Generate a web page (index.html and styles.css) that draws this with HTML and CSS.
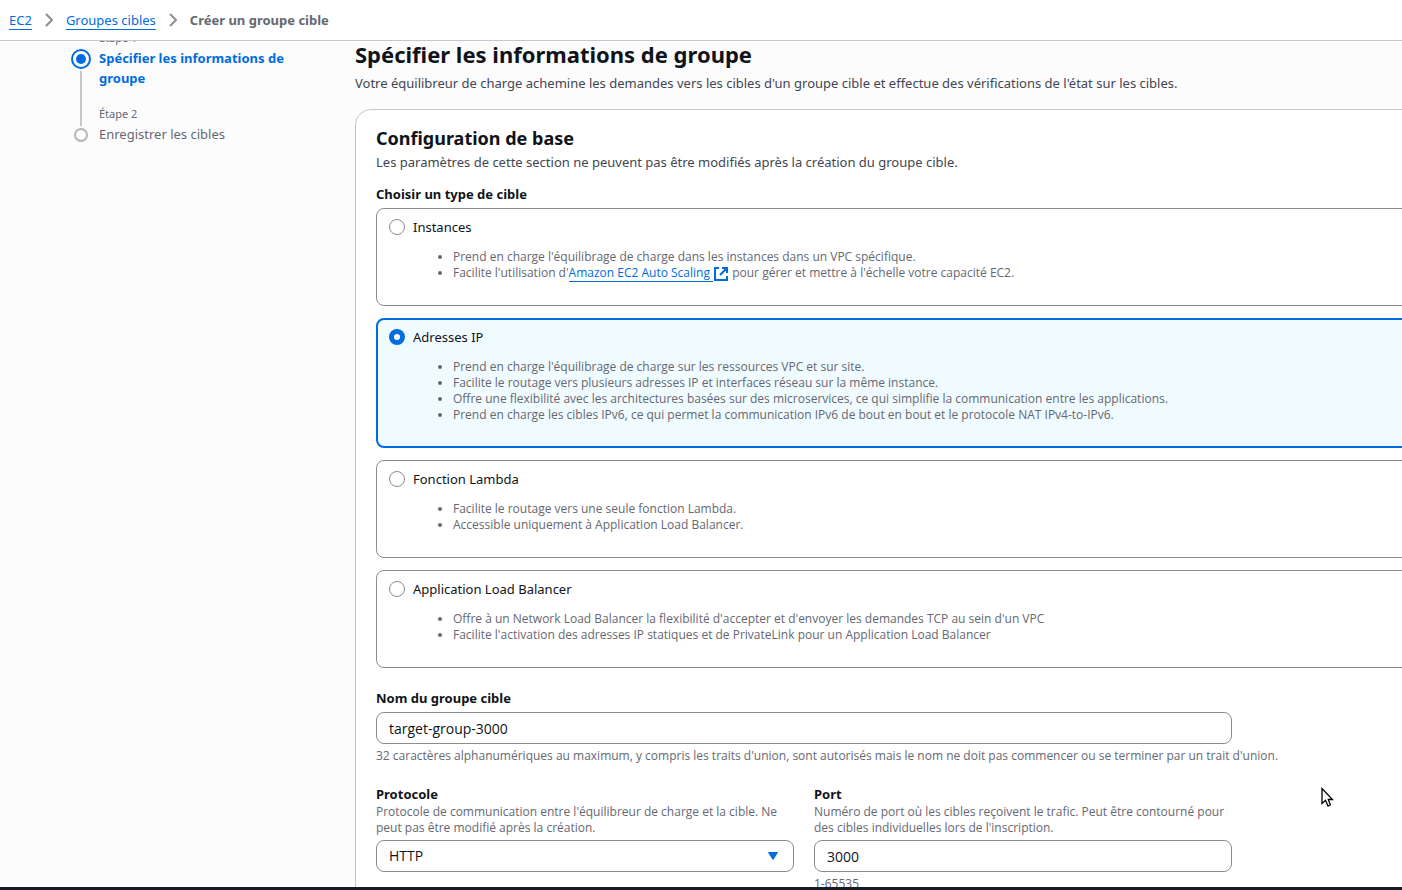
FILE: index.html
```html
<!DOCTYPE html>
<html lang="fr">
<head>
<meta charset="utf-8">
<meta name="viewport" content="width=device-width, initial-scale=1">
<title>Créer un groupe cible</title>
<link rel="stylesheet" href="styles.css">
</head>
<body>
<header class="topbar">
  <nav aria-label="Fil d'Ariane">
    <ol class="breadcrumbs">
      <li><a class="crumb-link" href="#ec2">EC2</a></li>
      <li><svg class="chevron" viewBox="0 0 16 16" aria-hidden="true"><path d="M4 2l6 6-6 6"/></svg><a class="crumb-link" href="#groupes">Groupes cibles</a></li>
      <li><svg class="chevron" viewBox="0 0 16 16" aria-hidden="true"><path d="M4 2l6 6-6 6"/></svg><span class="crumb-current" aria-current="page">Créer un groupe cible</span></li>
    </ol>
  </nav>
</header>
<div class="layout">
  <nav class="wizard-nav" aria-label="Étapes">
    <ol class="steps">
      <li class="step step-active">
        <span class="rail"><svg class="step-dot" viewBox="0 0 20 20" aria-hidden="true"><circle cx="10" cy="10" r="9" fill="none" stroke="currentColor" stroke-width="2"/><circle cx="10" cy="10" r="5" fill="currentColor"/></svg><span class="connector"></span></span>
        <span class="step-body"><span class="step-number">Étape 1</span><a class="step-title" href="#etape1" aria-current="step">Spécifier les informations de groupe</a></span>
      </li>
      <li class="step">
        <span class="rail"><svg class="step-dot" viewBox="0 0 20 20" aria-hidden="true"><circle cx="10" cy="10" r="6" fill="none" stroke="currentColor" stroke-width="2"/></svg></span>
        <span class="step-body"><span class="step-number">Étape 2</span><span class="step-title">Enregistrer les cibles</span></span>
      </li>
    </ol>
  </nav>
  <main class="content">
    <h1>Spécifier les informations de groupe</h1>
    <p class="lead">Votre équilibreur de charge achemine les demandes vers les cibles d'un groupe cible et effectue des vérifications de l'état sur les cibles.</p>
    <form class="panel">
      <h2>Configuration de base</h2>
      <p class="panel-lead">Les paramètres de cette section ne peuvent pas être modifiés après la création du groupe cible.</p>
      <fieldset class="tiles">
        <legend class="field-label">Choisir un type de cible</legend>
        <div class="tile">
          <input class="radio" type="radio" name="type" id="t-instances">
          <div class="tile-body">
            <label class="tile-label" for="t-instances">Instances</label>
            <ul class="tile-list">
              <li>Prend en charge l'équilibrage de charge dans les instances dans un VPC spécifique.</li>
              <li>Facilite l'utilisation d'<a class="ext-link" href="#autoscaling"><span class="ext-text">Amazon EC2 Auto Scaling&nbsp;</span><svg class="ext-icon" viewBox="0 0 14 14" aria-hidden="true"><path d="M5 1H1v12h12V9M8 1h5v5M13 1L6 8"/></svg></a> pour gérer et mettre à l'échelle votre capacité EC2.</li>
            </ul>
          </div>
        </div>
        <div class="tile tile-selected">
          <input class="radio" type="radio" name="type" id="t-ip" checked>
          <div class="tile-body">
            <label class="tile-label" for="t-ip">Adresses IP</label>
            <ul class="tile-list">
              <li>Prend en charge l'équilibrage de charge sur les ressources VPC et sur site.</li>
              <li>Facilite le routage vers plusieurs adresses IP et interfaces réseau sur la même instance.</li>
              <li>Offre une flexibilité avec les architectures basées sur des microservices, ce qui simplifie la communication entre les applications.</li>
              <li>Prend en charge les cibles IPv6, ce qui permet la communication IPv6 de bout en bout et le protocole NAT IPv4-to-IPv6.</li>
            </ul>
          </div>
        </div>
        <div class="tile">
          <input class="radio" type="radio" name="type" id="t-lambda">
          <div class="tile-body">
            <label class="tile-label" for="t-lambda">Fonction Lambda</label>
            <ul class="tile-list">
              <li>Facilite le routage vers une seule fonction Lambda.</li>
              <li>Accessible uniquement à Application Load Balancer.</li>
            </ul>
          </div>
        </div>
        <div class="tile">
          <input class="radio" type="radio" name="type" id="t-alb">
          <div class="tile-body">
            <label class="tile-label" for="t-alb">Application Load Balancer</label>
            <ul class="tile-list">
              <li>Offre à un Network Load Balancer la flexibilité d'accepter et d'envoyer les demandes TCP au sein d'un VPC</li>
              <li>Facilite l'activation des adresses IP statiques et de PrivateLink pour un Application Load Balancer</li>
            </ul>
          </div>
        </div>
      </fieldset>
      <div class="field">
        <label class="field-label" for="name">Nom du groupe cible</label>
        <input class="control control-wide" type="text" id="name" value="target-group-3000" aria-describedby="name-hint">
        <p class="hint" id="name-hint">32 caractères alphanumériques au maximum, y compris les traits d'union, sont autorisés mais le nom ne doit pas commencer ou se terminer par un trait d'union.</p>
      </div>
      <div class="field-row">
        <div class="field">
          <label class="field-label" for="protocol">Protocole</label>
          <p class="description">Protocole de communication entre l'équilibreur de charge et la cible. Ne peut pas être modifié après la création.</p>
          <div class="select-wrap">
            <select class="control" id="protocol"><option>HTTP</option></select>
            <svg class="caret" viewBox="0 0 12 10" aria-hidden="true"><path d="M1.500 1.500h9L6 8.500z"/></svg>
          </div>
        </div>
        <div class="field">
          <label class="field-label" for="port">Port</label>
          <p class="description">Numéro de port où les cibles reçoivent le trafic. Peut être contourné pour des cibles individuelles lors de l'inscription.</p>
          <input class="control" type="text" inputmode="numeric" id="port" value="3000" aria-describedby="port-hint">
          <p class="hint" id="port-hint">1-65535</p>
        </div>
      </div>
    </form>
  </main>
</div>
<footer class="bottombar"></footer>
<svg class="pointer" viewBox="0 0 14 20" aria-hidden="true"><path d="M2 1.500v15l3.500-3.200L8 19l2.300-1.200L8.300 12.500H12.500z"/></svg>
</body>
</html>
```
FILE: styles.css
```css
* { box-sizing: border-box; }

body {
  margin: 0;
  height: 100vh;
  display: flex;
  flex-direction: column;
  overflow: hidden;
  position: relative;
  background: #fcfcfd;
  color: #0f141a;
  font-family: "Noto Sans", "Open Sans", sans-serif;
  font-size: 13px;
  line-height: 20px;
}

h1, h2, p, ol, ul { margin: 0; padding: 0; }
ol { list-style: none; }
a { color: #006ce0; text-decoration: none; }

.topbar {
  flex: none;
  background: #fff;
  border-bottom: 1px solid #c6c6cd;
  padding: 10px 9px;
}
.breadcrumbs, .breadcrumbs li { display: flex; align-items: center; }
.crumb-link { box-shadow: 0 -1px 0 #006ce0 inset; }
.crumb-current { color: #656871; font-weight: 700; }
.chevron {
  width: 16px;
  height: 16px;
  margin: 0 8px 0 10px;
  fill: none;
  stroke: #8c8c94;
  stroke-width: 2;
}

.layout {
  flex: 1;
  min-height: 0;
  display: flex;
  overflow: hidden;
}

.wizard-nav { flex: none; width: 355px; padding: 0 56px 0 71px; }
.steps { display: flex; flex-direction: column; gap: 18px; margin-top: -11px; }
.step { display: flex; gap: 8px; color: #656871; }
.rail { display: flex; flex-direction: column; align-items: center; padding-top: 19px; color: #b4b4bb; }
.step-dot { width: 20px; height: 20px; flex: none; }
.connector { flex: 1; width: 2px; margin: 2px 0 -38px; background: #c6c6cd; }
.step-body { display: flex; flex-direction: column; gap: 2px; }
.step-number { font-size: 11px; line-height: 16px; }
.step-active .step-dot, .step-active .step-title { color: #006ce0; }
.step-active .step-title { font-weight: 700; }

.content { flex: 1; min-width: 0; margin-right: -143px; }
h1 { font-size: 22px; line-height: 26px; }
.lead { margin-top: 6px; color: #424650; }

.panel {
  margin-top: 16px;
  padding: 16px 20px;
  background: #fff;
  border: 1px solid #c6c6cd;
  border-radius: 16px;
}
h2 { font-size: 18px; line-height: 24px; }
.panel-lead { margin-top: 2px; color: #424650; }

.tiles {
  display: flex;
  flex-direction: column;
  gap: 12px;
  margin: 12px 0 0;
  padding: 0;
  border: 0;
  min-width: 0;
}
.field-label { display: block; padding: 0; font-weight: 700; }
.tiles .field-label { margin-bottom: 4px; }
.tile {
  display: flex;
  gap: 8px;
  padding: 8px 12px 12px;
  border: 1px solid #8c8c94;
  border-radius: 8px;
}
.tile-selected { padding: 7px 11px 11px; border: 2px solid #006ce0; background: #f0fbff; }
.radio {
  appearance: none;
  flex: none;
  width: 16px;
  height: 16px;
  margin: 2px 0;
  border: 1px solid #8c8c94;
  border-radius: 50%;
  background: #fff;
}
.radio:checked { border: 5px solid #006ce0; }
.tile-label { display: block; }
.tile-list {
  margin: 12px 0;
  padding-left: 40px;
  color: #656871;
  font-family: "Open Sans", "Noto Sans", sans-serif;
  font-size: 12px;
  line-height: 16px;
}
.ext-text { box-shadow: 0 1px 0 #006ce0; }
.ext-icon {
  width: 14px;
  height: 14px;
  margin: -2px 1px;
  vertical-align: middle;
  fill: none;
  stroke: #006ce0;
  stroke-width: 2;
}

.field { margin-top: 20px; }
.control {
  display: block;
  width: 100%;
  height: 32px;
  padding: 4px 12px;
  border: 1px solid #8c8c94;
  border-radius: 8px;
  background: #fff;
  color: #0f141a;
  font: 14px/20px "Open Sans", "Noto Sans", sans-serif;
  appearance: none;
}
.control-wide { width: calc(75% - 5px); margin-top: 4px; }
.hint, .description {
  color: #656871;
  font-family: "Open Sans", "Noto Sans", sans-serif;
  font-size: 12px;
  line-height: 16px;
}
.hint { margin-top: 4px; }
.description { margin-bottom: 4px; }
.field-row { display: grid; grid-template-columns: 1fr 1fr; gap: 20px; width: calc(75% - 5px); }
.select-wrap { position: relative; }
.caret {
  position: absolute;
  top: 11px;
  right: 15px;
  width: 12px;
  height: 10px;
  fill: #006ce0;
  stroke: #006ce0;
  stroke-width: 1;
  stroke-linejoin: round;
  pointer-events: none;
}

.bottombar { flex: none; height: 3px; background: #161d26; }

.pointer {
  position: absolute;
  left: 1320px;
  top: 787px;
  width: 14px;
  height: 20px;
  fill: #fff;
  stroke: #000;
  stroke-width: 1.300;
}
```
